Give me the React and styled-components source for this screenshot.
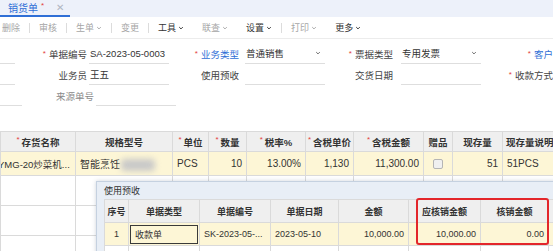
import React from 'react'
import styled, { createGlobalStyle } from 'styled-components'

const GlobalStyle = createGlobalStyle`
  html, body {
    margin: 0;
    padding: 0;
    background: #fff;
  }
  body {
    width: 553px;
    height: 251px;
    overflow: hidden;
    font-family: "Liberation Sans", "Noto Sans CJK SC", sans-serif;
    color: #333;
  }
`

const Page = styled.div`
  position: relative;
  width: 553px;
  height: 251px;
  overflow: hidden;
`

const TabBar = styled.div`
  height: 17px;
  background: #edf1fa;
  display: flex;
  align-items: stretch;
`

const Tab = styled.div`
  width: 70px;
  box-sizing: border-box;
  padding-left: 8px;
  display: flex;
  align-items: center;
  font-size: 10px;
  color: #2f6fd6;
  border-bottom: 2px solid #2f6fd6;
`

const Dirty = styled.span`
  color: #e34040;
  font-size: 8px;
  margin: -4px 0 0 3px;
`

const Close = styled.span`
  color: #b0b6c2;
  font-size: 10px;
  margin-left: 12px;
`

const Toolbar = styled.div`
  height: 21px;
  display: flex;
  align-items: center;
  padding-left: 2px;
  border-bottom: 1px solid #ececec;
`

const ToolItem = styled.span`
  display: flex;
  align-items: center;
  gap: 2px;
  padding: 0 9px;
  font-size: 9px;
  color: ${p => (p.$active ? '#333' : '#a6a6a6')};
  &:first-child {
    padding-left: 0;
  }
`

const Sep = styled.span`
  width: 1px;
  height: 10px;
  background: #dcdcdc;
`

const Chevron = ({ color = 'currentColor', size = 6 }) => (
  <svg width={size} height={size} viewBox="0 0 10 10">
    <path d="M2 3.5 L5 6.5 L8 3.5" fill="none" stroke={color} strokeWidth="1.6" />
  </svg>
)

const Form = styled.div`
  padding-top: 4px;
`

const FormRow = styled.div`
  display: flex;
  height: 21px;
`

const Field = styled.div`
  display: flex;
  align-items: stretch;
`

const Label = styled.span`
  width: ${p => p.$w}px;
  margin-right: ${p => p.$gap || 0}px;
  display: flex;
  align-items: center;
  justify-content: flex-end;
  font-size: 9.5px;
  white-space: nowrap;
  color: ${p => (p.$tone === 'link' ? '#2f6fd6' : p.$tone === 'muted' ? '#8a8a8a' : '#444')};
  ${p =>
    p.$req &&
    `&::before {
      content: '*';
      color: #e34040;
      font-size: 8px;
      margin-right: 3px;
    }`}
`

const Input = styled.div`
  width: ${p => p.$w || 80}px;
  box-sizing: border-box;
  border-bottom: 1px solid #dedede;
  display: flex;
  align-items: center;
  justify-content: space-between;
  padding: 0 4px 0 1px;
  font-size: 9.5px;
  color: #333;
`

const Spacer = styled.div`
  height: 25px;
`

const Grid = styled.table`
  border-collapse: collapse;
  table-layout: fixed;
  width: ${p => p.$w}px;
  font-size: ${p => p.$fs}px;

  th, td {
    border: 1px solid #dadada;
    padding: 0 4px;
    white-space: nowrap;
    overflow: hidden;
    text-overflow: ellipsis;
  }
  th {
    padding: 0 1px;
    background: #efefef;
    font-weight: bold;
    font-size: ${p => p.$hfs}px;
    color: #333;
    text-align: center;
    text-overflow: clip;
  }
`

const HeadRow = styled.tr`
  height: ${p => p.$h}px;
`

const BodyRow = styled.tr`
  height: ${p => p.$h}px;
  td {
    background: ${p => (p.$hl ? '#fdf6d6' : '#fff')};
  }
`

const Cell = styled.td`
  text-align: ${p => p.$align || 'left'};
  color: #333;
`

const CutCell = styled.td`
  && {
    padding: 0;
    text-overflow: clip;
    text-indent: -3px;
    font-size: 9.5px;
  }
`

const Req = styled.span`
  color: #e34040;
  font-weight: normal;
  font-size: 8px;
  margin-right: 2px;
  vertical-align: top;
`

const Blur = styled.span`
  display: inline-block;
  width: 34px;
  height: 12px;
  margin-left: 1px;
  vertical-align: middle;
  background: #c8c8c8;
  border-radius: 4px;
  filter: blur(3px);
`

const Check = styled.span`
  display: inline-block;
  width: 8px;
  height: 8px;
  border: 1px solid #b5b5b5;
  border-radius: 2px;
  background: #f0f0f0;
  vertical-align: middle;
`

const Dialog = styled.div`
  position: absolute;
  left: 96px;
  top: 181px;
  width: 480px;
  height: 80px;
  background: #e8eef6;
  border: 1px solid #c5d1e0;
  box-shadow: 0 0 4px rgba(60, 80, 110, 0.25);
`

const DialogTitle = styled.div`
  height: 17px;
  padding-left: 7px;
  display: flex;
  align-items: center;
  font-size: 9px;
  color: #333;
`

const DialogBody = styled.div`
  padding-left: 7px;
`

const EditCell = styled.td`
  && {
    padding: 1px;
  }
`

const EditBox = styled.div`
  height: 19px;
  box-sizing: border-box;
  border: 1px solid #3a3a3a;
  display: flex;
  align-items: center;
  padding-left: 4px;
`

const Highlight = styled.div`
  position: absolute;
  left: 319px;
  top: 16px;
  width: 133px;
  height: 47px;
  box-sizing: border-box;
  border: 2px solid #e3262b;
  border-radius: 3px;
`

const mainCols = [75, 97, 36, 38, 59, 48, 70, 29, 50, 60]
const dlgCols = [24, 71, 71, 68, 70, 72, 68, 40]

export default function App() {
  return (
    <Page>
      <GlobalStyle />
      <TabBar>
        <Tab>
          销货单<Dirty>*</Dirty>
          <Close>✕</Close>
        </Tab>
      </TabBar>

      <Toolbar>
        <ToolItem>删除</ToolItem>
        <Sep />
        <ToolItem>审核</ToolItem>
        <Sep />
        <ToolItem>生单<Chevron /></ToolItem>
        <Sep />
        <ToolItem>变更</ToolItem>
        <Sep />
        <ToolItem $active>工具<Chevron /></ToolItem>
        <ToolItem>联查<Chevron /></ToolItem>
        <ToolItem $active>设置<Chevron /></ToolItem>
        <Sep />
        <ToolItem>打印<Chevron /></ToolItem>
        <ToolItem $active>更多<Chevron /></ToolItem>
      </Toolbar>

      <Form>
        <FormRow>
          <Input $w={22} />
          <Field>
            <Label $w={72} $gap={2} $req>单据编号</Label>
            <Input>SA-2023-05-0003</Input>
          </Field>
          <Field>
            <Label $w={70} $gap={6} $req $tone="link">业务类型</Label>
            <Input>普通销售<Chevron color="#666" /></Input>
          </Field>
          <Field>
            <Label $w={68} $gap={8} $req>票据类型</Label>
            <Input>专用发票<Chevron color="#666" /></Input>
          </Field>
          <Field>
            <Label $w={72} $req $tone="link">客户</Label>
          </Field>
        </FormRow>
        <FormRow>
          <Input $w={22} />
          <Field>
            <Label $w={72} $gap={2}>业务员</Label>
            <Input>王五</Input>
          </Field>
          <Field>
            <Label $w={70} $gap={6}>使用预收</Label>
            <Input />
          </Field>
          <Field>
            <Label $w={68} $gap={8}>交货日期</Label>
            <Input />
          </Field>
          <Field>
            <Label $w={72} $req>收款方式</Label>
          </Field>
        </FormRow>
        <FormRow>
          <Input $w={22} />
          <Field>
            <Label $w={72} $gap={2} $tone="muted">来源单号</Label>
            <Input />
          </Field>
        </FormRow>
      </Form>

      <Spacer />

      <Grid $w={mainCols.reduce((a, b) => a + b, 0)} $fs={10} $hfs={9.5}>
        <colgroup>
          {mainCols.map((w, i) => <col key={i} style={{ width: w }} />)}
        </colgroup>
        <thead>
          <HeadRow $h={20}>
            <th><Req>*</Req>存货名称</th>
            <th>规格型号</th>
            <th><Req>*</Req>单位</th>
            <th><Req>*</Req>数量</th>
            <th><Req>*</Req>税率%</th>
            <th><Req>*</Req>含税单价</th>
            <th><Req>*</Req>含税金额</th>
            <th>赠品</th>
            <th>现存量</th>
            <th style={{ textAlign: 'left', paddingLeft: 3 }}>现存量说明</th>
          </HeadRow>
        </thead>
        <tbody>
          <BodyRow $h={24} $hl>
            <CutCell>YMG-20炒菜机...</CutCell>
            <Cell>智能烹饪<Blur /></Cell>
            <Cell>PCS</Cell>
            <Cell $align="right">10</Cell>
            <Cell $align="right">13.00%</Cell>
            <Cell $align="right">1,130</Cell>
            <Cell $align="right">11,300.00</Cell>
            <Cell $align="center"><Check /></Cell>
            <Cell $align="right">51</Cell>
            <Cell>51PCS</Cell>
          </BodyRow>
          {[0, 1, 2].map(r => (
            <BodyRow key={r} $h={30}>
              {mainCols.map((_, i) => <Cell key={i} />)}
            </BodyRow>
          ))}
        </tbody>
      </Grid>

      <Dialog>
        <DialogTitle>使用预收</DialogTitle>
        <DialogBody>
          <Grid $w={dlgCols.reduce((a, b) => a + b, 0)} $fs={9} $hfs={9}>
            <colgroup>
              {dlgCols.map((w, i) => <col key={i} style={{ width: w }} />)}
            </colgroup>
            <thead>
              <HeadRow $h={23}>
                <th>序号</th>
                <th>单据类型</th>
                <th>单据编号</th>
                <th>单据日期</th>
                <th>金额</th>
                <th>应核销金额</th>
                <th>核销金额</th>
                <th />
              </HeadRow>
            </thead>
            <tbody>
              <BodyRow $h={23} $hl>
                <Cell $align="center">1</Cell>
                <EditCell><EditBox>收款单</EditBox></EditCell>
                <Cell>SK-2023-05-...</Cell>
                <Cell>2023-05-10</Cell>
                <Cell $align="right">10,000.00</Cell>
                <Cell $align="right">10,000.00</Cell>
                <Cell $align="right">0.00</Cell>
                <Cell />
              </BodyRow>
              <BodyRow $h={23}>
                {dlgCols.map((_, i) => <Cell key={i} />)}
              </BodyRow>
            </tbody>
          </Grid>
        </DialogBody>
        <Highlight />
      </Dialog>
    </Page>
  )
}
